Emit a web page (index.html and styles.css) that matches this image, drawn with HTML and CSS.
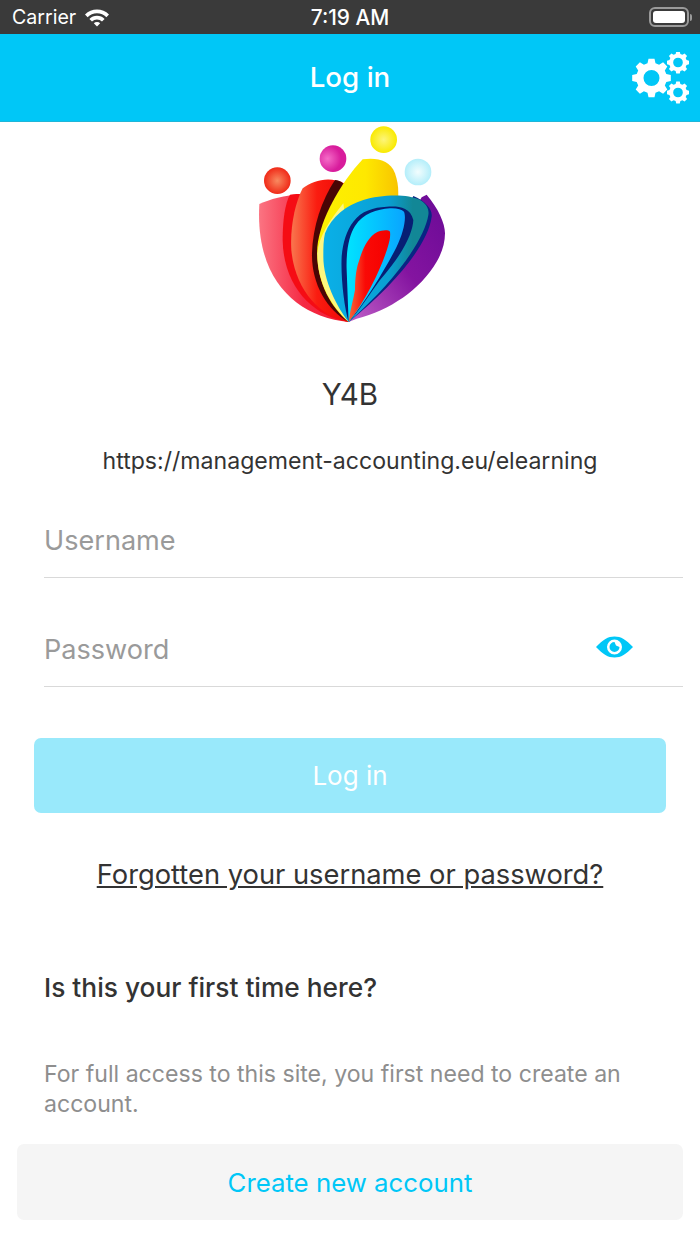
FILE: index.html
```html
<!DOCTYPE html>
<html lang="en">
<head>
    <meta charset="UTF-8">
    <meta name="viewport" content="width=device-width, initial-scale=1.0">
    <title>Log in</title>
    <link rel="stylesheet" href="styles.css">
</head>
<body>
    <div class="status-bar">
        <div class="status-left">
            <span>Carrier</span>
            <svg class="wifi" width="26" height="19" viewBox="0 0 26 19">
                <path d="M1 6.5 A17 17 0 0 1 25 6.5 L22.4 9.2 A13.2 13.2 0 0 0 3.6 9.2 Z" fill="#fff"/>
                <path d="M5.4 10.9 A10.8 10.8 0 0 1 20.6 10.9 L18 13.5 A7 7 0 0 0 8 13.5 Z" fill="#fff"/>
                <path d="M9.8 15.3 A4.6 4.6 0 0 1 16.2 15.3 L13 18.6 Z" fill="#fff"/>
            </svg>
        </div>
        <span class="status-time">7:19 AM</span>
        <div class="battery">
            <div class="battery-body"><div class="battery-fill"></div></div>
            <div class="battery-cap"></div>
        </div>
    </div>

    <header class="top-bar">
        <h1>Log in</h1>
        <svg class="gears" width="60" height="54" viewBox="0 0 60 54">
            <g fill="#fff">
                <path transform="translate(1.5 -1.8)" fill-rule="evenodd" d="M18 8.5 L24 8.5 L25 13 L28.6 14.5 L32.6 12 L36.8 16.2 L34.3 20.2 L35.8 23.8 L40.3 24.8 L40.3 30.8 L35.8 31.8 L34.3 35.4 L36.8 39.4 L32.6 43.6 L28.6 41.1 L25 42.6 L24 47 L18 47 L17 42.6 L13.4 41.1 L9.4 43.6 L5.2 39.4 L7.7 35.4 L6.2 31.8 L1.7 30.8 L1.7 24.8 L6.2 23.8 L7.7 20.2 L5.2 16.2 L9.4 12 L13.4 14.5 L17 13 Z M21 19.8 A8 8 0 1 0 21 35.8 A8 8 0 1 0 21 19.8 Z"/>
                <path transform="translate(49 10.5) scale(.88) translate(-47.5 -12.5)" fill-rule="evenodd" d="M45.5 0 L49.5 0 L50.2 2.8 L52.5 3.8 L55 2.2 L57.8 5 L56.2 7.5 L57.2 9.8 L60 10.5 L60 14.5 L57.2 15.2 L56.2 17.5 L57.8 20 L55 22.8 L52.5 21.2 L50.2 22.2 L49.5 25 L45.5 25 L44.8 22.2 L42.5 21.2 L40 22.8 L37.2 20 L38.8 17.5 L37.8 15.2 L35 14.5 L35 10.5 L37.8 9.8 L38.8 7.5 L37.2 5 L40 2.2 L42.5 3.8 L44.8 2.8 Z M47.5 7 A5.5 5.5 0 1 0 47.5 18 A5.5 5.5 0 1 0 47.5 7 Z"/>
                <path transform="translate(49 40.5) scale(.88) translate(-47.5 -12.5)" fill-rule="evenodd" d="M45.5 0 L49.5 0 L50.2 2.8 L52.5 3.8 L55 2.2 L57.8 5 L56.2 7.5 L57.2 9.8 L60 10.5 L60 14.5 L57.2 15.2 L56.2 17.5 L57.8 20 L55 22.8 L52.5 21.2 L50.2 22.2 L49.5 25 L45.5 25 L44.8 22.2 L42.5 21.2 L40 22.8 L37.2 20 L38.8 17.5 L37.8 15.2 L35 14.5 L35 10.5 L37.8 9.8 L38.8 7.5 L37.2 5 L40 2.2 L42.5 3.8 L44.8 2.8 Z M47.5 7 A5.5 5.5 0 1 0 47.5 18 A5.5 5.5 0 1 0 47.5 7 Z"/>
            </g>
        </svg>
    </header>

    <main class="content">
        <svg class="logo" width="220" height="208" viewBox="0 6 660 624">
            <defs>
                <radialGradient id="ballRed"><stop offset="0" stop-color="#f88a60"/><stop offset="1" stop-color="#f02a18"/></radialGradient>
                <radialGradient id="ballPink" cx="0.3"><stop offset="0" stop-color="#f56cc8"/><stop offset="1" stop-color="#d81c9c"/></radialGradient>
                <radialGradient id="ballYellow"><stop offset="0" stop-color="#fdf57a"/><stop offset="1" stop-color="#f9ea00"/></radialGradient>
                <radialGradient id="ballBlue"><stop offset="0" stop-color="#f2fdfe"/><stop offset="1" stop-color="#b4eefa"/></radialGradient>
                <linearGradient id="petalPink" x1="0" x2="1"><stop offset="0" stop-color="#fb7482"/><stop offset="0.5" stop-color="#f52a44"/><stop offset="1" stop-color="#f01c30"/></linearGradient>
                <linearGradient id="petalRed" x1="0" x2="1"><stop offset="0" stop-color="#f9764e"/><stop offset="0.45" stop-color="#fa1c10"/><stop offset="1" stop-color="#ee0606"/></linearGradient>
                <linearGradient id="petalYellow" x1="0" x2="1"><stop offset="0" stop-color="#fdf200"/><stop offset="0.6" stop-color="#fee800"/><stop offset="1" stop-color="#f8c400"/></linearGradient>
                <linearGradient id="petalPurple" x1="0" x2="1" y1="1" y2="0"><stop offset="0" stop-color="#c060c8"/><stop offset="0.5" stop-color="#8414a0"/><stop offset="1" stop-color="#6a0a96"/></linearGradient>
                <linearGradient id="bandBlue" x1="0" x2="1"><stop offset="0" stop-color="#0ab0e8"/><stop offset="0.62" stop-color="#0a9fd2"/><stop offset="0.85" stop-color="#128796"/><stop offset="1" stop-color="#128796"/></linearGradient>
                <linearGradient id="bandCyan" x1="0" x2="1"><stop offset="0" stop-color="#00e4ff"/><stop offset="1" stop-color="#0aa4ff"/></linearGradient>
                <linearGradient id="inner" x1="0" x2="1"><stop offset="0" stop-color="#f5683a"/><stop offset="0.4" stop-color="#fa0a06"/><stop offset="1" stop-color="#f40000"/></linearGradient>
            </defs>
            <circle cx="112" cy="182" r="40" fill="url(#ballRed)"/>
            <circle cx="279" cy="116" r="40" fill="url(#ballPink)"/>
            <circle cx="431" cy="59" r="40" fill="url(#ballYellow)"/>
            <circle cx="534" cy="156" r="40" fill="url(#ballBlue)"/>

            <path d="M58 252 C90 238 130 224 190 224 L326 606 C170 590 45 480 58 252 Z" fill="url(#petalPink)"/>
            <path d="M150 224 C200 215 250 240 270 300 L326 606 C220 590 130 500 128 360 C128 300 135 250 150 224 Z" fill="#f50c14"/>
            <path d="M188 205 C220 180 270 168 312 190 L326 606 C240 590 165 510 154 390 C150 320 165 250 188 205 Z" fill="url(#petalRed)"/>
            <path d="M285 180 C302 182 312 190 314 200 L326 606 C260 570 214 490 216 400 C218 320 245 240 285 180 Z" fill="#4a0505"/>
            <path d="M368 118 C410 112 450 120 465 160 C475 190 476 210 474 240 L326 606 C270 560 226 480 232 380 C240 300 300 190 368 118 Z" fill="url(#petalYellow)"/>
            <path d="M310 250 C270 300 236 350 232 400 C232 490 275 560 326 606 L330 400 Z" fill="#fdf680"/>
            <path d="M545 232 L560 224 C595 265 615 310 615 340 C615 370 605 400 590 425 C540 510 450 570 350 596 L326 606 Z" fill="url(#petalPurple)"/>
            <path d="M520 228 C560 245 578 270 575 290 C565 370 470 490 326 606 Z" fill="#0a2484"/>
            <path d="M255 340 C275 290 320 255 370 240 C420 225 500 220 540 240 C560 252 568 268 565 285 C555 350 480 470 326 606 C290 560 250 480 250 410 C250 385 250 360 255 340 Z" fill="url(#bandBlue)"/>
            <path d="M305 410 C308 370 320 330 340 305 C365 272 400 262 440 260 C470 258 510 258 520 300 C518 340 490 400 420 480 C390 520 360 570 326 606 C312 560 302 470 305 410 Z" fill="#071f74"/>
            <path d="M320 450 C318 400 325 350 345 318 C370 280 410 268 450 265 C470 264 485 268 492 275 C500 295 490 340 470 380 C440 440 380 540 326 606 C324 560 322 500 320 450 Z" fill="url(#bandCyan)"/>
            <path d="M345 510 C345 470 350 440 358 420 C368 385 385 350 412 336 C425 330 445 328 450 335 C452 350 448 365 445 375 C430 430 385 530 326 606 C330 570 340 540 345 510 Z" fill="url(#inner)"/>
        </svg>

        <h2 class="site-name">Y4B</h2>
        <p class="site-url">https://management-accounting.eu/elearning</p>

        <form class="login-form">
            <div class="field"><input type="text" placeholder="Username"></div>
            <div class="field field-password">
                <input type="password" placeholder="Password">
                <svg class="eye" width="37" height="22" viewBox="0 0 37 22">
                    <path fill="#00c7f7" fill-rule="evenodd" d="M0 11 C7 3.5 12 0.5 18.5 0.5 C25 0.5 30 3.5 37 11 C30 18.5 25 21.5 18.5 21.5 C12 21.5 7 18.5 0 11 Z M18.5 3.5 A7.5 7.5 0 1 0 18.5 18.5 A7.5 7.5 0 1 0 18.5 3.5 Z"/>
                    <path fill="#00c7f7" d="M18.5 6 A5 5 0 1 0 23.5 11 L20 9.5 L18.5 6 Z"/>
                </svg>
            </div>
            <button type="button" class="btn-login">Log in</button>
        </form>

        <a class="forgot" href="#">Forgotten your username or password?</a>

        <section class="first-time">
            <h3>Is this your first time here?</h3>
            <p>For full access to this site, you first need to create an account.</p>
        </section>

        <button type="button" class="btn-create">Create new account</button>
    </main>
</body>
</html>
```

FILE: styles.css
```css
* {
    box-sizing: border-box;
}
body {
    font-family: Inter, sans-serif;
    color: #333;
    background-color: #fff;
    margin: 0;
    height: 1244px;
    overflow: hidden;
}
.status-bar {
    height: 34px;
    background-color: #3a3a3a;
    color: #fff;
    display: flex;
    align-items: center;
    justify-content: space-between;
    padding: 0 8px 0 12px;
    position: relative;
    font-size: 19.6px;
}
.status-left {
    display: flex;
    align-items: center;
    gap: 8px;
}
.status-time {
    position: absolute;
    left: 0;
    right: 0;
    text-align: center;
    font-size: 20.8px;
    font-weight: 500;
}
.battery {
    display: flex;
    align-items: center;
    gap: 1px;
}
.battery-body {
    width: 40px;
    height: 20px;
    border: 2px solid #9a9a9a;
    border-radius: 6px;
    padding: 2px;
}
.battery-fill {
    height: 100%;
    background-color: #fff;
    border-radius: 3px;
}
.battery-cap {
    width: 2px;
    height: 7px;
    background-color: #9a9a9a;
    border-radius: 0 2px 2px 0;
}
.top-bar {
    height: 88px;
    background-color: #00c7f7;
    border-bottom: 1px solid #1fb6d8;
    display: flex;
    align-items: center;
    justify-content: center;
    position: relative;
}
.top-bar h1 {
    margin: 0 0 1px;
    color: #fff;
    font-size: 27.7px;
    font-weight: 500;
}
.gears {
    position: absolute;
    right: 11px;
    top: 18px;
}
.content {
    display: flex;
    flex-direction: column;
    align-items: center;
}
.logo {
    display: block;
}
.site-name {
    margin: 47px 0 0;
    font-size: 29.5px;
    line-height: 34px;
    font-weight: 400;
}
.site-url {
    margin: 35px 0 0;
    font-size: 23.1px;
    line-height: 30px;
    color: #333;
}
.login-form {
    width: 100%;
    margin-top: 20px;
    display: flex;
    flex-direction: column;
}
.field {
    margin-left: 44px;
    margin-right: 17px;
    height: 82px;
    border-bottom: 1px solid #d9d9d9;
    display: flex;
    align-items: center;
    margin-bottom: 27px;
}
.field input {
    flex: 1;
    border: none;
    outline: none;
    padding: 8px 0 0;
    font-family: Inter, sans-serif;
    font-size: 27.1px;
    background: transparent;
    min-width: 0;
}
.field input::placeholder {
    color: #9a9a9a;
}
.eye {
    margin: 2px 50px 0 0;
}
.btn-login {
    margin: 24px 34px 0;
    height: 75px;
    border: none;
    border-radius: 7px;
    background-color: #99e9fb;
    color: #fff;
    font-family: Inter, sans-serif;
    font-size: 26px;
}
.forgot {
    margin-top: 45px;
    font-size: 27.3px;
    line-height: 34px;
    color: #333;
    text-decoration: underline;
}
.first-time {
    width: 100%;
    padding: 0 44px;
}
.first-time h3 {
    margin: 79px 0 0;
    font-size: 26.3px;
    line-height: 34px;
    font-weight: 500;
}
.first-time p {
    margin: 54px 0 0;
    font-size: 23.1px;
    line-height: 30px;
    color: #8e8e8e;
}
.btn-create {
    margin-top: 25px;
    width: 666px;
    height: 76px;
    border: none;
    border-radius: 7px;
    background-color: #f5f5f5;
    color: #00c7f7;
    font-family: Inter, sans-serif;
    font-size: 25.8px;
    padding-top: 2px;
}
```
